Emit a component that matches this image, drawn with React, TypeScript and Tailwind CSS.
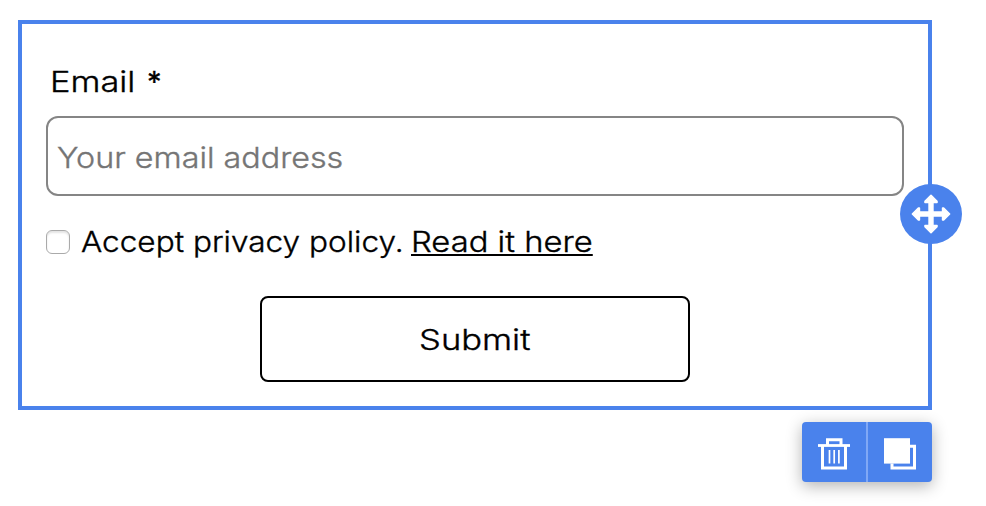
function MoveIcon() {
  return (
    <svg width="40" height="40" viewBox="-20 -20 40 40" fill="white" stroke="white" strokeWidth="1.6" strokeLinejoin="round">
      <path d="M0-18.6 6-12.6V-11.6H1.9V-1.9H11.6V-6H12.6L18.6 0 12.6 6H11.6V1.9H1.9V11.6H6V12.6L0 18.6-6 12.6V11.6H-1.9V1.9H-11.6V6H-12.6L-18.6 0-12.6-6H-11.6V-1.9H-1.9V-11.6H-6V-12.6Z" />
    </svg>
  );
}

function TrashIcon() {
  return (
    <svg width="32" height="32" viewBox="0 0 32 32" fill="none" stroke="white">
      <path d="M9.5 7V1.7H23V7" strokeWidth="3" />
      <path d="M0 7.5H32" strokeWidth="2.8" />
      <path d="M4.5 8V30.1H27.5V8" strokeWidth="3" />
      <path d="M11.5 12V25.6M16.2 12V25.6M20.9 12V25.6" strokeWidth="1.7" />
    </svg>
  );
}

function DuplicateIcon() {
  return (
    <svg width="32" height="32" viewBox="0 0 32 32" fill="none">
      <path d="M0 .2H26V25.6H0Z" fill="white" />
      <path d="M26 8.3H30.5V30.1H8V25.5" stroke="white" strokeWidth="3" />
    </svg>
  );
}

export default function App() {
  return (
    <div className="h-[506px] w-[986px] overflow-hidden bg-white pl-[18px] pt-5 font-[Inter,sans-serif] text-[29px] font-light leading-9 text-black [-webkit-text-stroke:0.35px]">
      <form className="relative flex h-[390px] w-[914px] flex-col border-4 border-[#4a82ec] px-6" onSubmit={(e) => e.preventDefault()}>
        <label htmlFor="email" className="mt-10 flex h-9 items-center pl-1">
          <span className="w-[97px] origin-left scale-x-[1.185]">Email</span>
          <span className="font-normal">*</span>
        </label>
        <div className="mt-4 flex h-20 w-[858px] shrink-0 items-center rounded-xl border-2 border-[#858585] bg-white pl-[9px]">
          <input
            id="email"
            placeholder="Your email address"
            className="h-full w-[750px] origin-left scale-x-[1.113] pt-0.5 outline-none [-webkit-text-stroke:0.35px_#757575] placeholder:text-[#757575]"
          />
        </div>
        <div className="mt-7 flex h-9 items-center whitespace-nowrap">
          <input type="checkbox" aria-label="Accept privacy policy" className="size-6 appearance-none rounded-[6px] border border-[#aaa] bg-white shadow-[inset_0_2px_2px_#e4e4e4]" />
          <span className="ml-[11px] w-[330px] origin-left scale-x-[1.088]">Accept privacy policy.</span>
          <a href="#" className="origin-left scale-x-[1.13] underline decoration-2 underline-offset-2">Read it here</a>
        </div>
        <button type="submit" className="ml-[214px] mt-9 flex h-[86px] w-[430px] items-center justify-center rounded-lg border-2 border-black pt-0.5">
          <span className="scale-x-[1.19]">Submit</span>
        </button>
        <div className="absolute -right-[34px] top-[160px] flex h-[60px] w-[62px] items-center justify-center rounded-[50%] bg-[#4a82ec]">
          <MoveIcon />
        </div>
      </form>
      <div className="ml-[784px] mt-3 flex h-[60px] w-[130px] rounded bg-[#4a82ec] shadow-[0_4px_16px_rgba(0,0,0,0.3)]">
        <button aria-label="Delete" className="flex w-16 items-center justify-center pt-1">
          <TrashIcon />
        </button>
        <div className="w-0.5 bg-[#80a8f6]" />
        <button aria-label="Duplicate" className="flex w-16 items-center justify-center pt-1">
          <DuplicateIcon />
        </button>
      </div>
    </div>
  );
}
